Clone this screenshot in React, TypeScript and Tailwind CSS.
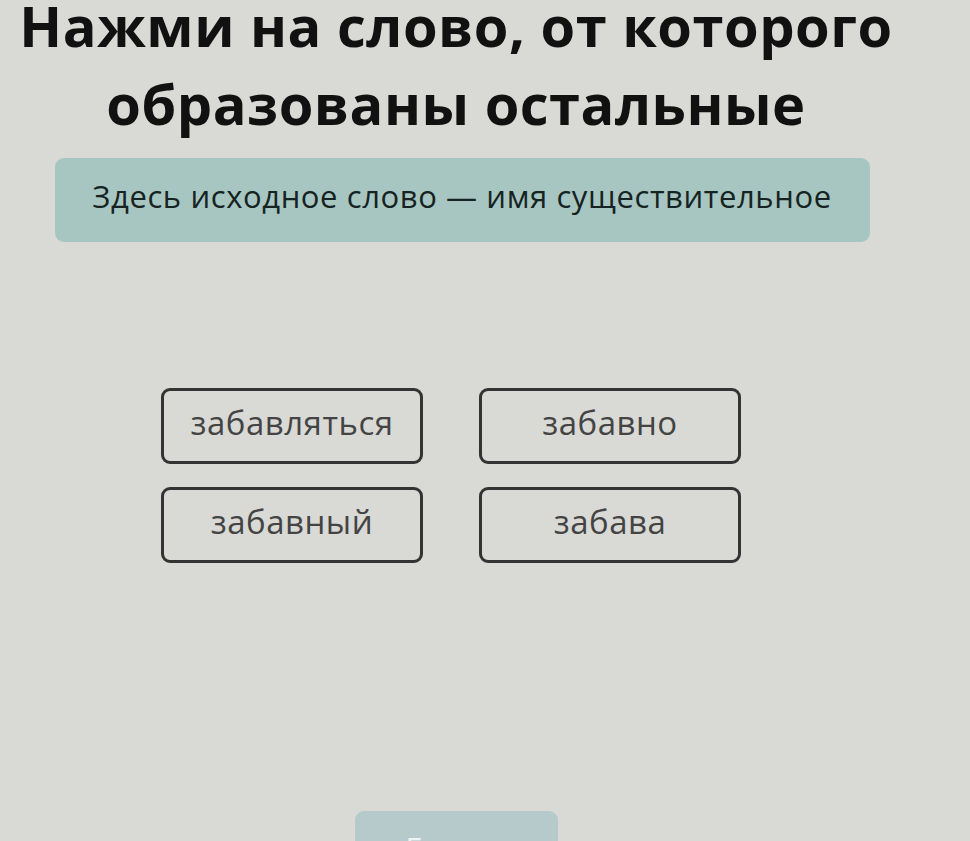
import React from "react";

export default function App() {
  const words = ["забавляться", "забавно", "забавный", "забава"];
  return (
    <div
      className="h-[841px] w-[970px] overflow-hidden bg-[#d9d9d6]"
      style={{ fontFamily: '"Open Sans", "Noto Sans", sans-serif' }}
    >
      <div className="flex w-[912px] flex-col items-center">
        <h1 className="flex flex-col items-center text-center text-[56px] font-bold leading-[50px] tracking-[0.5px] text-[#111]">
          <span className="block">Нажми на слово, от которого</span>
          <span className="mt-[28px] block">образованы остальные</span>
        </h1>
        <div className="ml-[12px] mt-[30px] flex h-[84px] w-[815px] items-center justify-center rounded-[9px] bg-[#a8c6c1] pb-[8px]">
          <span className="text-[31px] tracking-[0.6px] text-[#152322]">
            Здесь исходное слово — имя существительное
          </span>
        </div>
        <div className="mr-[10px] mt-[146px] grid grid-cols-[262px_262px] gap-x-[56px] gap-y-[23px]">
          {words.map((w) => (
            <div
              key={w}
              className="flex h-[76px] items-center justify-center rounded-[9px] border-[3px] border-[#333] pb-[6px] text-[33px] tracking-[0.5px] text-[#444]"
            >
              {w}
            </div>
          ))}
        </div>
        <div className="mt-[248px] flex h-[60px] w-[203px] items-start justify-center rounded-[9px] bg-[#b6cacb] pt-[14px] text-[30px] text-[#eef3f3]">
          Готово
        </div>
      </div>
    </div>
  );
}
